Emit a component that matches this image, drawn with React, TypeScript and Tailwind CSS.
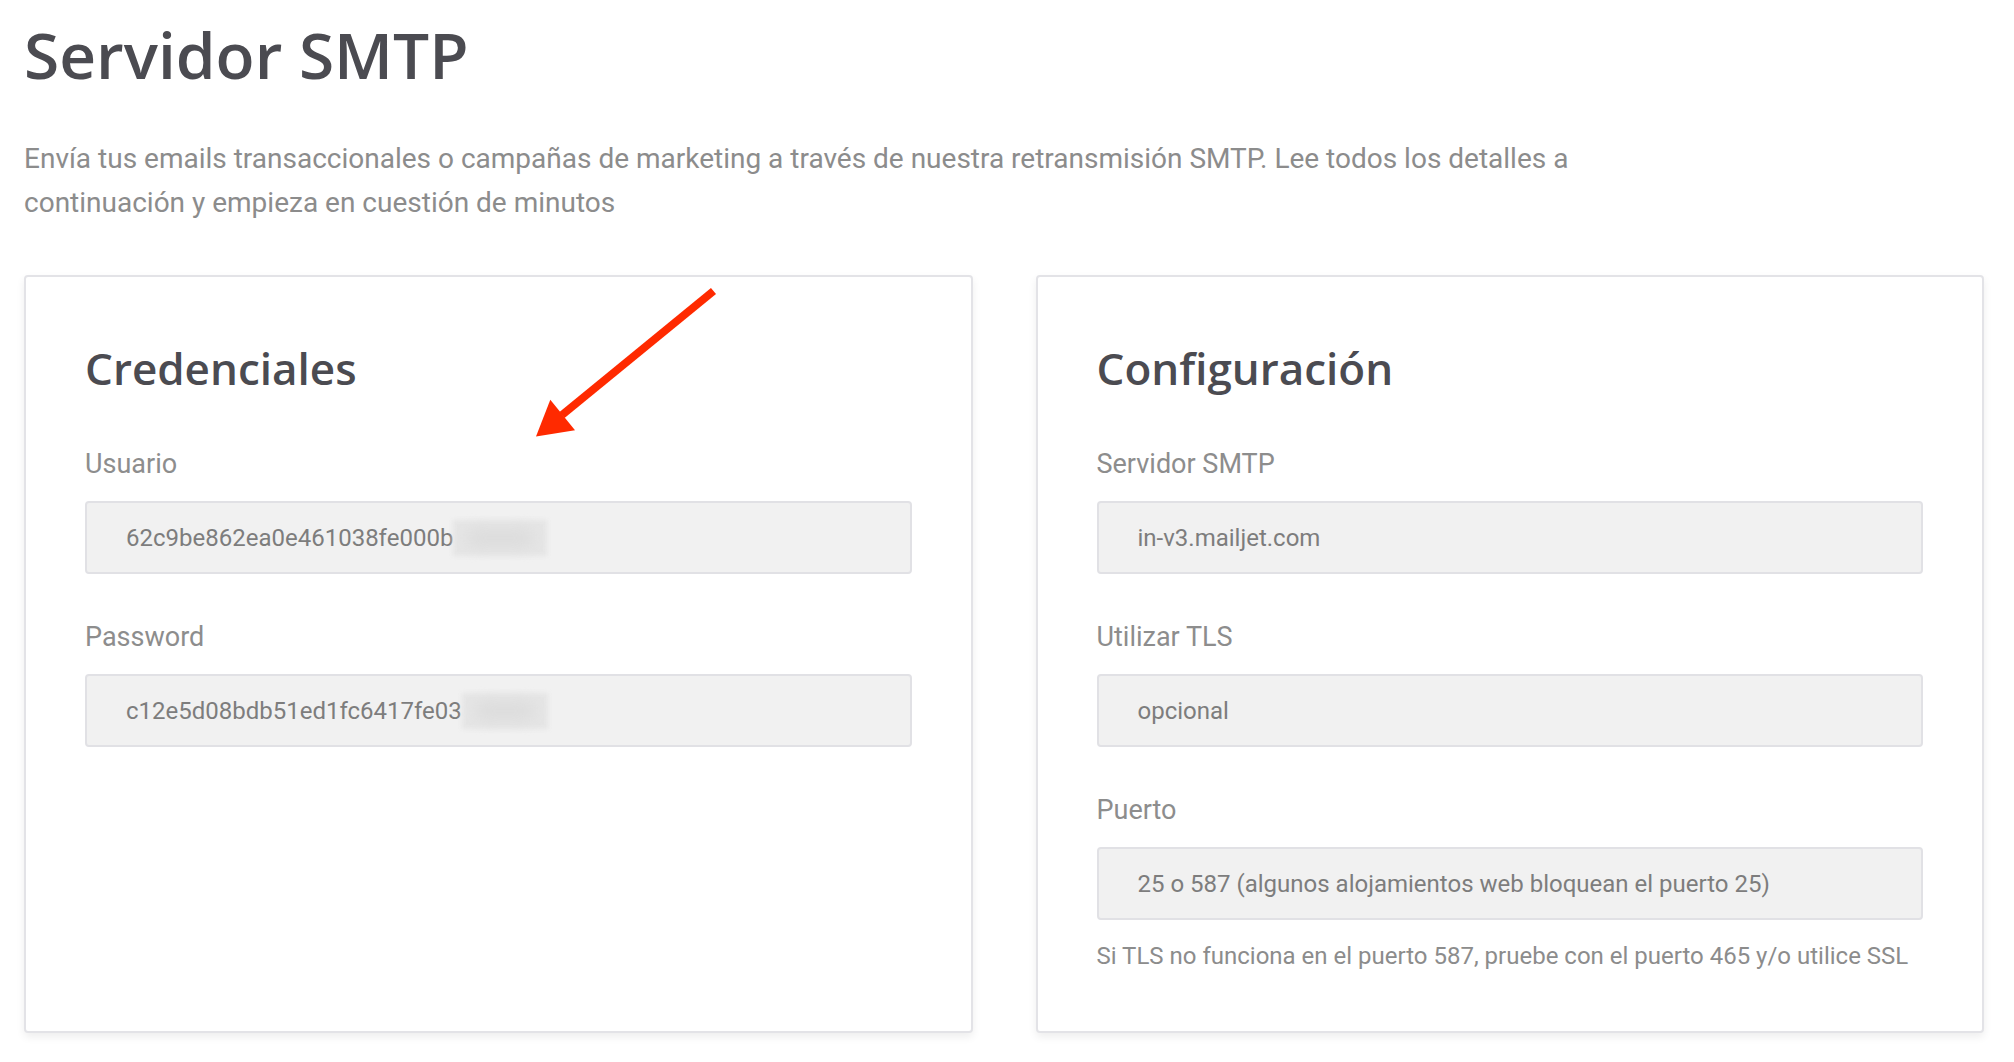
const credenciales = [
  { label: 'Usuario', value: '62c9be862ea0e461038fe000b', hidden: 94 },
  { label: 'Password', value: 'c12e5d08bdb51ed1fc6417fe03', hidden: 86 },
];

const configuracion = [
  { label: 'Servidor SMTP', value: 'in-v3.mailjet.com' },
  { label: 'Utilizar TLS', value: 'opcional' },
  { label: 'Puerto', value: '25 o 587 (algunos alojamientos web bloquean el puerto 25)' },
];

function Field({ label, value, hidden }: { label: string; value: string; hidden?: number }) {
  return (
    <div className="flex flex-col">
      <label className="text-[27px] leading-[34px] text-[#8d8d8d]">{label}</label>
      <div className="mt-[20px] flex h-[73px] items-center rounded-[4px] border-2 border-[#e1e1e5] bg-[#f1f1f1] pl-[39px] text-[24px] text-[#7d7d7d]">
        <span>{value}</span>
        {hidden && (
          <span className="relative inline-block h-[36px]" style={{ width: hidden }}>
            <span className="absolute inset-0 bg-[#e5e5e5] blur-[2px]" />
            <span className="absolute inset-x-[14px] inset-y-[9px] rounded-full bg-[#dcdcdc] blur-[7px]" />
          </span>
        )}
      </div>
    </div>
  );
}

function Card({ title, children }: { title: string; children: React.ReactNode }) {
  return (
    <section className="relative rounded-[4px] border-2 border-[#e3e3e7] bg-white px-[59px] pb-[60px] pt-[66px] shadow-[0_4px_8px_rgba(0,0,0,0.07)]">
      <h2 className="font-['Open_Sans',sans-serif] text-[44px] font-semibold leading-[50px] text-[#4b4b51]">
        {title}
      </h2>
      <div className="mt-[54px] flex flex-col gap-[46px]">{children}</div>
    </section>
  );
}

export default function App() {
  return (
    <div className="min-h-screen bg-white pl-[24px] pr-[30px] pt-[16px] font-['Roboto',sans-serif]">
      <h1 className="font-['Open_Sans',sans-serif] text-[64px] font-semibold leading-[77px] text-[#4b4b51]">
        Servidor SMTP
      </h1>
      <p className="mt-[44px] max-w-[1600px] text-[28px] leading-[44px] text-[#8c8c8c]">
        Envía tus emails transaccionales o campañas de marketing a través de nuestra retransmisión SMTP. Lee todos los
        detalles a continuación y empieza en cuestión de minutos
      </p>

      <div className="mt-[50px] grid grid-cols-2 gap-[63px]">
        <Card title="Credenciales">
          {credenciales.map((f) => (
            <Field key={f.label} {...f} />
          ))}
          <svg
            className="pointer-events-none absolute left-[500px] top-[10px] h-[160px] w-[200px]"
            viewBox="0 0 200 160"
          >
            <line x1="187.5" y1="4" x2="36" y2="128" stroke="#ff2a00" strokeWidth="8" />
            <polygon points="10,149.5 24.3,112.7 49,143.3" fill="#ff2a00" />
          </svg>
        </Card>
        <Card title="Configuración">
          {configuracion.map((f) => (
            <Field key={f.label} {...f} />
          ))}
          <p className="-mt-[25px] text-[24px] leading-[30px] text-[#8c8c8c]">
            Si TLS no funciona en el puerto 587, pruebe con el puerto 465 y/o utilice SSL
          </p>
        </Card>
      </div>
    </div>
  );
}
